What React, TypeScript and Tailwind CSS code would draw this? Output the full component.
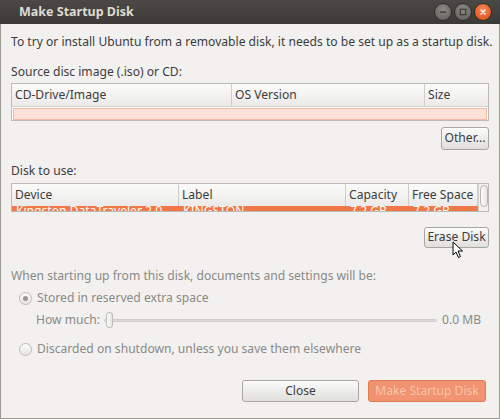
import React from "react";

const font = { fontFamily: '"Noto Sans", "DejaVu Sans", sans-serif' };

const WinButton = ({ kind }: { kind: "min" | "max" | "close" }) => {
  const bg =
    kind === "close"
      ? "bg-[radial-gradient(circle_at_50%_35%,#f58a5a,#dd4814)]"
      : "bg-[radial-gradient(circle_at_50%_35%,#8a8984,#5d5c58)]";
  return (
    <div
      className={`w-[18px] h-[18px] rounded-full ${bg} border border-[#2e2d2a] flex items-center justify-center`}
    >
      <svg width="10" height="10" viewBox="0 0 10 10">
        {kind === "min" && <rect x="2" y="4.5" width="6" height="1.3" fill="#3a3935" />}
        {kind === "max" && (
          <rect x="2.3" y="2.3" width="5.4" height="5.4" fill="none" stroke="#3a3935" strokeWidth="1.2" />
        )}
        {kind === "close" && (
          <path d="M3 3 L7 7 M7 3 L3 7" stroke="#fff" strokeWidth="1.4" strokeLinecap="round" />
        )}
      </svg>
    </div>
  );
};

const HeadCell = ({ label, className }: { label: string; className: string }) => (
  <div
    className={`${className} h-[22px] flex items-center px-[3px] whitespace-nowrap overflow-hidden border-r border-[#cfcdc9] bg-[linear-gradient(#fbfbfa,#ebeae8)] text-[#3c3c3c]`}
  >
    {label}
  </div>
);

const Button = ({ children, className }: { children: React.ReactNode; className: string }) => (
  <div
    className={`${className} flex items-center justify-center whitespace-nowrap rounded-[3px] border border-[#a8a6a1] bg-[linear-gradient(#fbfbfa,#e0dfdc)] text-[#3c3c3c] shadow-[inset_0_1px_0_#fff]`}
  >
    {children}
  </div>
);

const Radio = ({ checked }: { checked?: boolean }) => (
  <div className="w-[13px] h-[13px] rounded-full border border-[#bdbbb7] bg-[linear-gradient(#fdfdfd,#e6e5e2)] flex items-center justify-center">
    {checked && <div className="w-[5px] h-[5px] rounded-full bg-[#9a9893]" />}
  </div>
);

export default function App() {
  return (
    <div className="w-[500px] h-[419px] bg-[#f2f1f0] text-[12.1px] text-[#3c3c3c] flex flex-col overflow-hidden" style={font}>
      {/* title bar */}
      <div className="h-[24px] shrink-0 bg-[linear-gradient(#4a4945,#3b3a36)] flex items-center pl-[19px] pr-[8px]">
        <div className="font-bold text-[#dfdbd2] text-[12.5px] flex-1">Make Startup Disk</div>
        <div className="flex gap-[2px]">
          <WinButton kind="min" />
          <WinButton kind="max" />
          <WinButton kind="close" />
        </div>
      </div>

      <div className="flex-1 flex flex-col border-l border-r border-b border-[#9c9a95] px-[10px]">
        <div className="mt-[9px] leading-[18px] whitespace-nowrap">
          To try or install Ubuntu from a removable disk, it needs to be set up as a startup disk.
        </div>

        <div className="mt-[12px] leading-[18px]">Source disc image (.iso) or CD:</div>
        <div className="mt-[2px] h-[38px] border border-[#bcbab5] bg-white flex flex-col">
          <div className="flex border-b border-[#d5d3cf]">
            <HeadCell label="CD-Drive/Image" className="w-[220px]" />
            <HeadCell label="OS Version" className="w-[193px]" />
            <HeadCell label="Size" className="flex-1 border-r-0" />
          </div>
          <div className="mx-[1px] mt-[1px] h-[12px] bg-[#fbe1d7] border border-[#f3b9a3]" />
        </div>

        <div className="flex justify-end mt-[6px]">
          <Button className="w-[48px] h-[23px]">Other...</Button>
        </div>

        <div className="mt-[12px] leading-[18px]">Disk to use:</div>
        <div className="mt-[3px] h-[29px] border border-[#bcbab5] bg-white flex overflow-hidden">
          <div className="flex-1 flex flex-col">
            <div className="flex">
              <HeadCell label="Device" className="w-[167px]" />
              <HeadCell label="Label" className="w-[167px]" />
              <HeadCell label="Capacity" className="w-[63px]" />
              <HeadCell label="Free Space" className="flex-1" />
            </div>
            <div className="h-[6px] bg-[#f07746] text-white flex leading-[10px] overflow-hidden">
              <div className="w-[167px] px-[4px] whitespace-nowrap overflow-hidden">Kingston DataTraveler 2.0…</div>
              <div className="w-[167px] px-[4px]">KINGSTON</div>
              <div className="w-[63px] px-[4px] whitespace-nowrap">7.2 GB</div>
              <div className="flex-1 px-[4px] whitespace-nowrap">7.2 GB</div>
            </div>
          </div>
          <div className="w-[10px] bg-[#f2f1f0] border-l border-[#d5d3cf] flex justify-center pt-[1px]">
            <div className="w-[8px] h-[22px] rounded-[4px] border border-[#b8b6b1] bg-[linear-gradient(90deg,#fbfbfa,#e6e5e2)]" />
          </div>
        </div>

        <div className="flex justify-end mt-[15px] relative">
          <Button className="w-[65px] h-[21px]">Erase Disk</Button>
          <svg className="absolute right-[25px] top-[14px]" width="12" height="18" viewBox="0 0 12 18">
            <path d="M1 1 L1 14 L4 11 L6.5 16.5 L8.5 15.5 L6 10 L10.5 10 Z" fill="#fff" stroke="#000" strokeWidth="1" strokeLinejoin="round" />
          </svg>
        </div>

        <div className="mt-[19px] leading-[18px] text-[#8b8985]">
          When starting up from this disk, documents and settings will be:
        </div>
        <div className="mt-[3px] pl-[8px] flex items-center gap-[5px] h-[20px] text-[#8b8985]">
          <Radio checked />
          <span>Stored in reserved extra space</span>
        </div>
        <div className="pl-[25px] mt-[2px] flex items-center h-[20px] text-[#8b8985]">
          <span className="w-[68px] whitespace-nowrap">How much:</span>
          <div className="relative flex-1 h-[20px] flex items-center">
            <div className="w-full h-[3px] rounded-full bg-[#dcdad6] border border-[#cfcdc9]" />
            <div className="absolute left-[2px] top-[2px] w-[7px] h-[16px] rounded-[3px] border border-[#bdbbb7] bg-[linear-gradient(90deg,#fdfdfd,#e6e5e2)]" />
          </div>
          <span className="w-[52px] pl-[5px] whitespace-nowrap">0.0 MB</span>
        </div>
        <div className="mt-[9px] pl-[8px] flex items-center gap-[5px] h-[20px] text-[#8b8985]">
          <Radio />
          <span>Discarded on shutdown, unless you save them elsewhere</span>
        </div>

        <div className="flex justify-end gap-[9px] mt-[21px] pr-[3px]">
          <Button className="w-[117px] h-[22px]">Close</Button>
          <div className="w-[118px] h-[22px] rounded-[3px] border border-[#e07a50] bg-[#f19270] text-[#f7c4ae] whitespace-nowrap flex items-center justify-center">
            Make Startup Disk
          </div>
        </div>
      </div>
    </div>
  );
}
